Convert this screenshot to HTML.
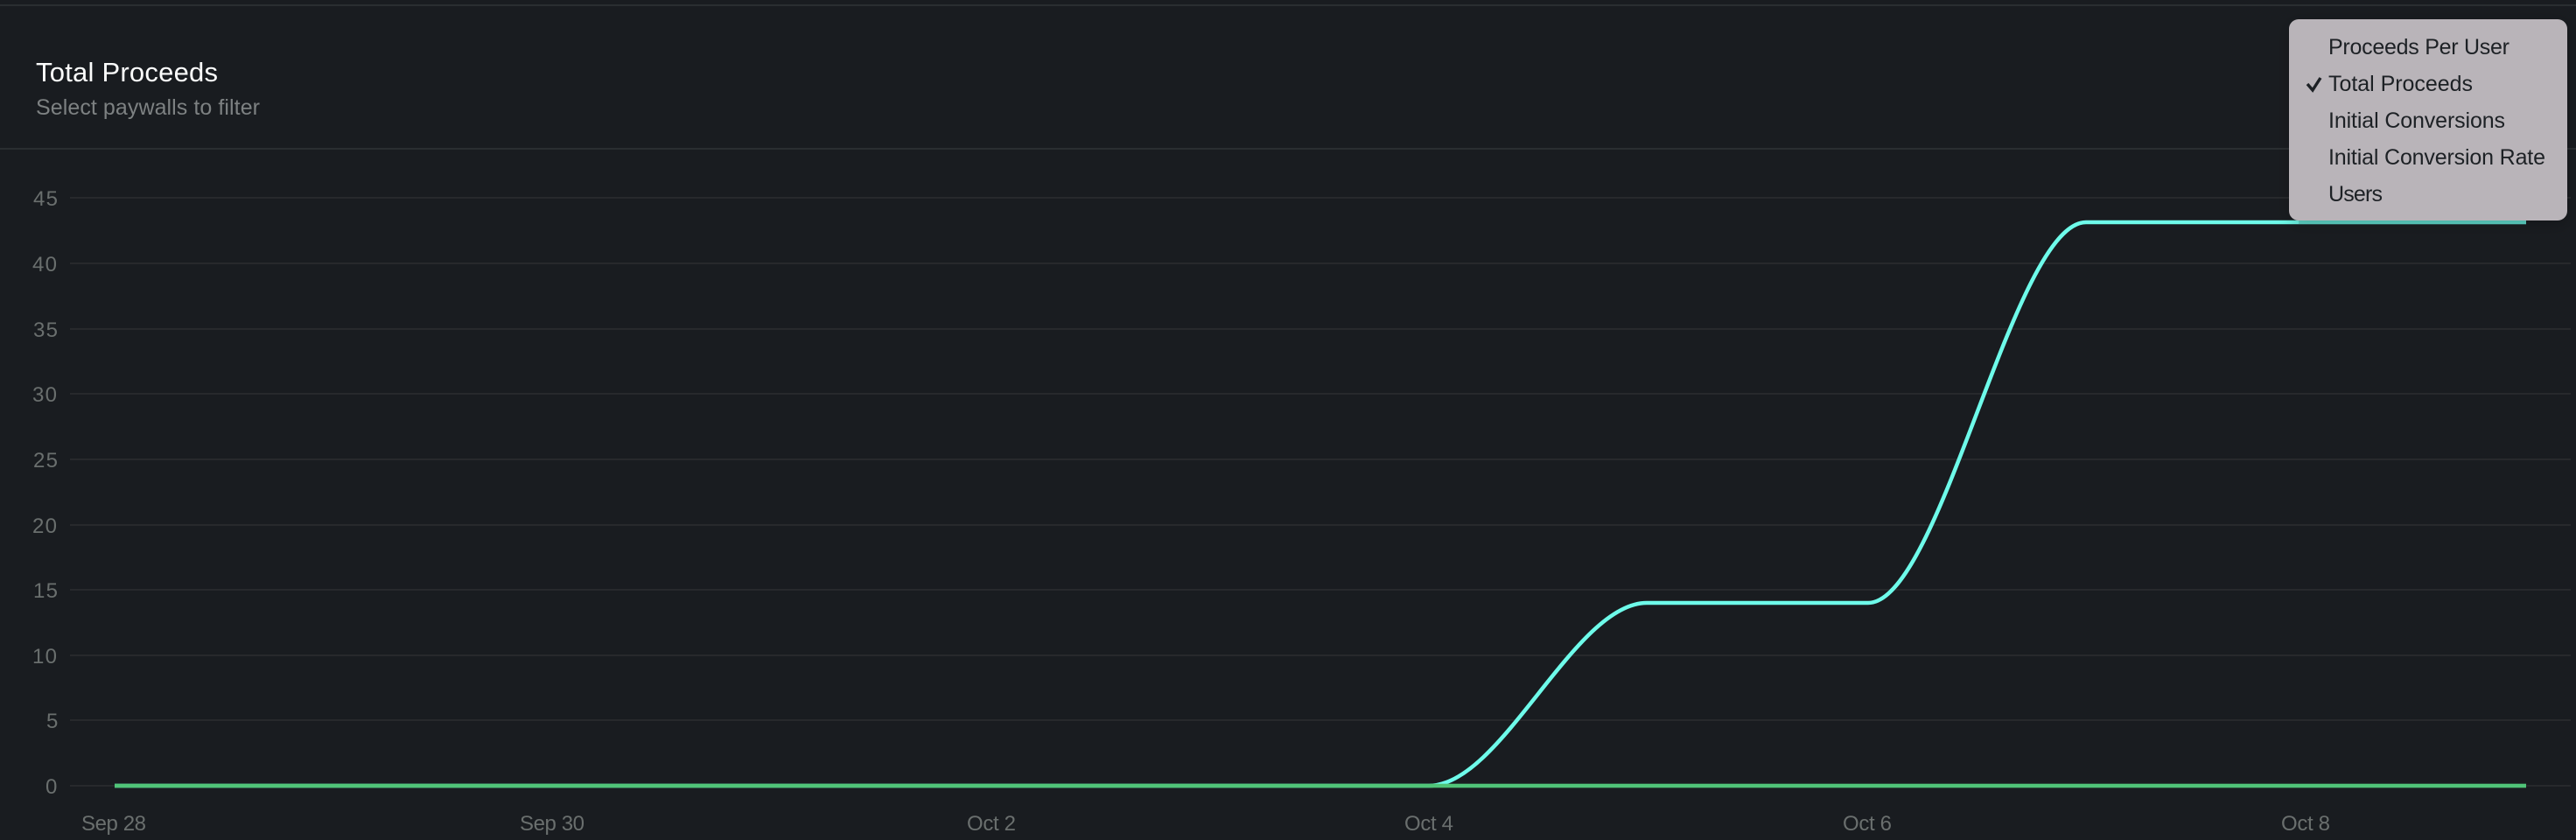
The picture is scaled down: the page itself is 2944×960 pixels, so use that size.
<!DOCTYPE html>
<html>
<head>
<meta charset="utf-8">
<style>
html,body{margin:0;padding:0;background:#191c20;width:2944px;height:960px;overflow:hidden}
svg{display:block}
text{font-family:"Liberation Sans",sans-serif}
.y,.x{font-size:24px;fill:#6a6f6e}
.m{font-size:25px;fill:#1d2125}
</style>
</head>
<body>
<svg width="2944" height="960" viewBox="0 0 2944 960" xmlns="http://www.w3.org/2000/svg">
<defs>
<filter id="s" x="-20%" y="-30%" width="140%" height="160%">
<feDropShadow dx="0" dy="4" stdDeviation="8" flood-color="#000" flood-opacity="0.22"/>
</filter>
</defs>
<rect width="2944" height="960" fill="#191c20"/>
<rect x="0" y="5" width="2944" height="2" fill="#2a2e31"/>
<rect x="0" y="169" width="2944" height="2" fill="#2a2e31"/>
<text x="41" y="93" font-size="31" fill="#fbfcfc" textLength="208">Total Proceeds</text>
<text x="41" y="131" font-size="25" fill="#7d8182" textLength="256">Select paywalls to filter</text>

<g fill="#27292c">
<rect x="80" y="225" width="2858" height="2"/>
<rect x="80" y="300" width="2858" height="2"/>
<rect x="80" y="375" width="2858" height="2"/>
<rect x="80" y="449" width="2858" height="2"/>
<rect x="80" y="524" width="2858" height="2"/>
<rect x="80" y="599" width="2858" height="2"/>
<rect x="80" y="673" width="2858" height="2"/>
<rect x="80" y="748" width="2858" height="2"/>
<rect x="80" y="822" width="2858" height="2"/>
<rect x="80" y="897" width="2858" height="2"/>
</g>

<g class="y">
<text x="38" y="235" textLength="28">45</text>
<text x="37" y="310" textLength="28">40</text>
<text x="38" y="385" textLength="28">35</text>
<text x="37" y="459" textLength="28">30</text>
<text x="38" y="534" textLength="28">25</text>
<text x="37" y="609" textLength="28">20</text>
<text x="38" y="683" textLength="28">15</text>
<text x="37" y="758" textLength="28">10</text>
<text x="53" y="832">5</text>
<text x="52" y="907">0</text>
</g>
<g class="x">
<text x="93" y="949" textLength="74">Sep 28</text>
<text x="594" y="949" textLength="74">Sep 30</text>
<text x="1105" y="949" textLength="56">Oct 2</text>
<text x="1605" y="949" textLength="56">Oct 4</text>
<text x="2106" y="949" textLength="56">Oct 6</text>
<text x="2607" y="949" textLength="56">Oct 8</text>
</g>

<path d="M131 898 L1633 898 C1716 898 1799 689 1882 689 L2135 689 C2218 689 2301 254 2384 254 L2887 254" fill="none" stroke="#6efbea" stroke-width="4.5"/>
<rect x="131" y="895.7" width="2756" height="4.6" fill="#50c478"/>

<rect x="2627" y="251" width="260" height="5" fill="#5fd8ca"/>
<rect x="2616" y="22" width="318" height="230" rx="11" fill="#b9b4b9" filter="url(#s)"/>
<path d="M2637 96 L2643 103 L2652 89" fill="none" stroke="#1d2125" stroke-width="3.4"/>
<g class="m">
<text x="2661" y="62" textLength="207">Proceeds Per User</text>
<text x="2661" y="104" textLength="165">Total Proceeds</text>
<text x="2661" y="146" textLength="202">Initial Conversions</text>
<text x="2661" y="188" textLength="248">Initial Conversion Rate</text>
<text x="2661" y="230" textLength="62">Users</text>
</g>
</svg>
</body>
</html>
